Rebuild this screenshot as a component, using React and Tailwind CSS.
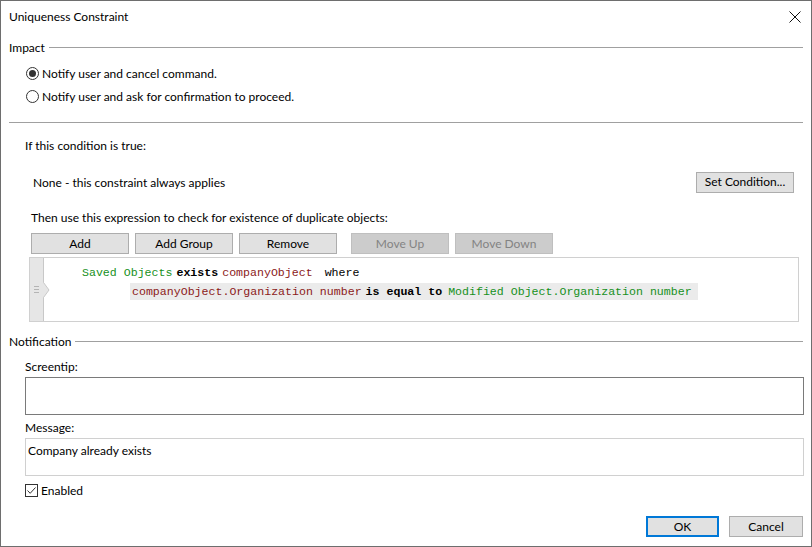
import React from "react";

const font = { fontFamily: "'Segoe UI', Lato, 'Noto Sans', sans-serif" };

function Btn({ children, w = "w-[98px]", disabled = false, primary = false }) {
  let cls = "h-[21px] flex items-center justify-center text-[12px] " + w + " ";
  if (disabled) cls += "bg-[#cccccc] border border-[#bfbfbf] text-[#838383]";
  else if (primary) cls += "bg-[#e1e1e1] border-2 border-[#0078d7] text-black";
  else cls += "bg-[#e1e1e1] border border-[#adadad] text-black";
  return <div className={cls}>{children}</div>;
}

function Radio({ checked, label }) {
  return (
    <div className="h-[23px] flex items-center pl-[25px]">
      <div className="w-[13px] h-[13px] rounded-full border border-[#333333] bg-white flex items-center justify-center">
        {checked && <div className="w-[7px] h-[7px] rounded-full bg-[#333333]" />}
      </div>
      <span className="ml-[3px] pt-px">{label}</span>
    </div>
  );
}

function GroupHeader({ title }) {
  return (
    <div className="flex items-center pl-[8px] pr-[8px]">
      <span className="pt-px">{title}</span>
      <div className="flex-1 h-px bg-[#a0a0a0] ml-[4px]" />
    </div>
  );
}

export default function App() {
  return (
    <div
      style={font}
      className="w-[812px] h-[547px] bg-white border border-[#6e6e6e] flex flex-col text-[12px] text-black overflow-hidden"
    >
      {/* title bar */}
      <div className="h-[31px] flex items-center pl-[8px] pr-[10px] justify-between">
        <span className="pt-px">Uniqueness Constraint</span>
        <svg width="12" height="12" viewBox="0 0 12 12">
          <path d="M0.5 0.5L11.5 11.5M11.5 0.5L0.5 11.5" stroke="#111" strokeWidth="1" />
        </svg>
      </div>

      <div className="h-[30px] flex flex-col justify-center">
        <GroupHeader title="Impact" />
      </div>

      <Radio checked label="Notify user and cancel command." />
      <Radio label="Notify user and ask for confirmation to proceed." />

      <div className="mt-[14px] h-px bg-[#a0a0a0] ml-[8px] mr-[8px]" />

      <div className="mt-[11px] h-[22px] flex items-center pl-[24px] pt-px">If this condition is true:</div>

      <div className="mt-[15px] h-[22px] flex items-center justify-between pl-[32px] pr-[17px]">
        <span className="pt-px">None - this constraint always applies</span>
        <Btn w="w-[98px]">Set Condition...</Btn>
      </div>

      <div className="mt-[13px] h-[22px] flex items-center pl-[30px] pt-px">
        Then use this expression to check for existence of duplicate objects:
      </div>

      <div className="mt-[5px] flex pl-[30px]">
        <Btn>Add</Btn>
        <div className="w-[6px]" />
        <Btn>Add Group</Btn>
        <div className="w-[6px]" />
        <Btn>Remove</Btn>
        <div className="w-[14px]" />
        <Btn disabled>Move Up</Btn>
        <div className="w-[6px]" />
        <Btn disabled>Move Down</Btn>
      </div>

      {/* expression editor */}
      <div className="mt-[3px] ml-[28px] w-[770px] h-[65px] border border-[#d0d0d0] flex">
        <div className="relative w-[14px] bg-[#e6e6e6] border-r border-[#c8c8c8] flex items-center justify-center">
          <div className="flex flex-col gap-[2px]">
            <div className="w-[5px] h-px bg-[#b4b4b4]" />
            <div className="w-[5px] h-px bg-[#b4b4b4]" />
            <div className="w-[5px] h-px bg-[#b4b4b4]" />
          </div>
          <svg width="7" height="16" viewBox="0 0 7 16" className="absolute left-[13px] top-[24px]">
            <path d="M0 0L6 8L0 16Z" fill="#e6e6e6" />
            <path d="M0.5 0.5L6 8L0.5 15.5" fill="none" stroke="#c8c8c8" strokeWidth="1" />
          </svg>
        </div>
        <div
          className="flex-1 pt-[5px] text-[11.6px]"
          style={{ fontFamily: "Consolas, 'Liberation Mono', monospace" }}
        >
          <div className="h-[19px] flex items-center pl-[38px] whitespace-pre">
            <span className="text-[#16901c]">Saved Objects</span>
            <span className="ml-[4px] font-bold text-black">exists</span>
            <span className="ml-[4px] text-[#8b1a1a]">companyObject</span>
            <span className="ml-[12px] text-black">where</span>
          </div>
          <div className="h-[19px] flex items-center pl-[86px] whitespace-pre">
            <div className="h-[17px] flex items-center bg-[#ebebeb] pl-[2px] pr-[6px]">
              <span className="text-[#8b1a1a]">companyObject.Organization number</span>
              <span className="ml-[4px] font-bold text-black">is equal to</span>
              <span className="ml-[6px] text-[#16901c]">Modified Object.Organization number</span>
            </div>
          </div>
        </div>
      </div>

      <div className="mt-[9px] h-[20px] flex flex-col justify-center">
        <GroupHeader title="Notification" />
      </div>

      <div className="mt-[5px] h-[20px] flex items-center pl-[24px] pt-px">Screentip:</div>
      <div className="mt-[1px] ml-[24px] w-[779px] h-[38px] border border-[#7a7a7a]" />

      <div className="mt-[2px] h-[20px] flex items-center pl-[24px] pt-px">Message:</div>
      <div className="mt-[1px] ml-[24px] w-[779px] h-[38px] border border-[#d0d0d0] pl-[2px] pt-[3px]">
        Company already exists
      </div>

      <div className="mt-[4px] h-[20px] flex items-center pl-[24px]">
        <div className="w-[13px] h-[13px] border border-[#333333] bg-white flex items-center justify-center">
          <svg width="11" height="11" viewBox="0 0 11 11">
            <path d="M1.5 5.5L4.2 8.3L9.5 2.5" fill="none" stroke="#333" strokeWidth="1" />
          </svg>
        </div>
        <span className="ml-[3px] pt-px">Enabled</span>
      </div>

      <div className="mt-[16px] flex justify-end pr-[8px]">
        <Btn w="w-[73px]" primary>OK</Btn>
        <div className="w-[10px]" />
        <Btn w="w-[74px]">Cancel</Btn>
      </div>
    </div>
  );
}
